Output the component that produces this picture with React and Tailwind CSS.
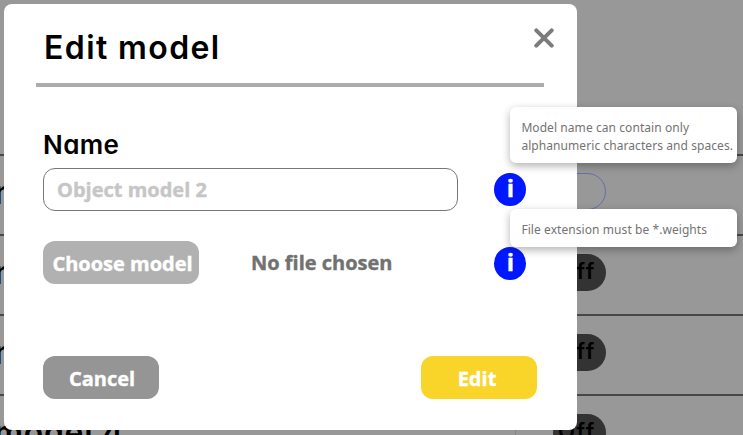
const rows = [
  { name: "Object model 1", on: true },
  { name: "Object model 2", on: false },
  { name: "Object model 3", on: false },
  { name: "Object model 4", on: false },
];

function Row({ name, on }) {
  return (
    <div className="flex h-20 shrink-0 items-start border-b-2 border-[#484848]">
      <div className="flex h-full w-[124px] justify-end pt-[17px] font-['Inter'] text-[32px] leading-[40px] font-semibold tracking-[0.7px] whitespace-nowrap [font-feature-settings:'cv02','cv11','tnum']">
        {name}
      </div>
      <div className="h-full w-[392px] border-r border-[#858585]" />
      <div
        className={
          on
            ? "mt-[17px] ml-[37px] h-[37px] w-[53px] rounded-full border border-[#4450b8]/60"
            : "mt-[18px] ml-[37px] h-[37px] w-[53px] rounded-full bg-[#333] pl-[5px] font-['Inter'] text-[22px] leading-[35px] font-semibold tracking-[1.6px]"
        }
      >
        {on ? "" : "Off"}
      </div>
    </div>
  );
}

function Info({ children, className }) {
  return (
    <div className="relative h-[33px] w-8">
      <div className="flex h-[33px] w-8 justify-center rounded-[50%] bg-[#0018ff] font-['Open_Sans'] text-[24px] leading-[30px] font-bold text-white">
        i
      </div>
      <div
        className={
          "absolute left-4 w-[227px] rounded-md bg-white px-[11px] font-['Noto_Sans'] text-[12px] leading-[18px] font-normal tracking-[0.07px] whitespace-nowrap text-[#737373] shadow-[0_3px_8px_rgba(0,0,0,0.3)] [-webkit-text-stroke:0] " +
          className
        }
      >
        {children}
      </div>
    </div>
  );
}

export default function App() {
  return (
    <div className="relative h-[435px] w-[743px] overflow-hidden bg-[#989898] text-black">
      <div className="flex h-[476px] flex-col">
        <div className="h-[156px] shrink-0 border-b-2 border-[#484848]" />
        {rows.map((r) => (
          <Row key={r.name} {...r} />
        ))}
      </div>

      <div className="absolute top-1 left-1 flex h-[426px] w-[573px] flex-col rounded-lg bg-white font-['Open_Sans'] text-[20px] font-bold [-webkit-text-stroke:0.4px]">
        <div className="ml-8 flex h-[83px] w-[508px] shrink-0 justify-between border-b-4 border-[#acacac] pl-[8px]">
          <h1 className="pt-[23px] font-['Inter'] text-[32px] leading-[42px] font-semibold tracking-[1.4px] [-webkit-text-stroke:0] [font-feature-settings:'cv11']">
            Edit model
          </h1>
          <svg className="mt-6 -mr-[10px] h-5 w-5" viewBox="0 0 20 20">
            <path d="M2.3 2.3 17.7 17.7M17.7 2.3 2.3 17.7" stroke="#7c7c7c" strokeWidth="4" strokeLinecap="round" />
          </svg>
        </div>
        <label className="mt-[37px] ml-[39px] h-[42px] font-['Inter'] text-[26px] leading-[42px] font-semibold tracking-[0.4px] [-webkit-text-stroke:0] [font-feature-settings:'cv11']">
          Name
        </label>
        <div className="mt-[2px] ml-[39px] flex h-[43px] items-center">
          <div className="h-[43px] w-[415px] rounded-[12px] border-[1.5px] border-[#777] pl-[13px] leading-[41px] text-[#c6c6c6]">
            Object model 2
          </div>
          <div className="ml-[36.4px]">
            <Info className="-top-[66px] h-[56px] pt-[12px]">
              Model name can contain only
              <br />
              alphanumeric characters and spaces.
            </Info>
          </div>
        </div>
        <div className="mt-[30px] ml-[39px] flex h-[43px] items-center">
          <div className="h-[43px] w-[156px] rounded-[12px] bg-[#b1b1b1] pl-[3px] text-center leading-[45px] text-white">
            Choose model
          </div>
          <div className="ml-[52px] w-[243.4px] leading-[45px] text-[#717171]">No file chosen</div>
          <div className="pt-px">
            <Info className="-top-[38px] h-[38px] pt-[12px]">File extension must be *.weights</Info>
          </div>
        </div>
        <div className="mt-[72px] ml-[39px] flex h-[43px] w-[494px] justify-between text-center leading-[45px] text-white">
          <div className="w-[116px] rounded-[12px] bg-[#959595] pl-0.5">Cancel</div>
          <div className="w-[116px] rounded-[12px] bg-[#f8d528] pr-1">Edit</div>
        </div>
      </div>
    </div>
  );
}
